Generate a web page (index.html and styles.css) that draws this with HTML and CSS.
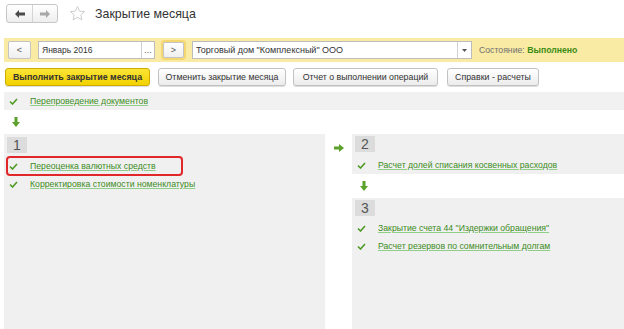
FILE: index.html
```html
<!DOCTYPE html>
<html lang="ru">

<head>
    <meta charset="UTF-8">
    <meta name="viewport" content="width=device-width, initial-scale=1.0">
    <title>Закрытие месяца</title>
    <link rel="stylesheet" href="styles.css">
</head>

<body>
    <header class="title-bar">
        <div class="nav-buttons">
            <span class="nav-btn">
                <svg width="10" height="8" viewBox="0 0 10 8"><path d="M0 4 L4 0 L4 2.5 L10 2.5 L10 5.5 L4 5.5 L4 8 Z" fill="#4a4a4a"/></svg>
            </span>
            <span class="nav-btn">
                <svg width="10" height="8" viewBox="0 0 10 8"><path d="M10 4 L6 0 L6 2.5 L0 2.5 L0 5.5 L6 5.5 L6 8 Z" fill="#a8a8a8"/></svg>
            </span>
        </div>
        <svg class="star" width="17" height="17" viewBox="0 0 24 24">
            <path d="M12 2 L14.9 8.6 L22 9.3 L16.6 14 L18.2 21 L12 17.3 L5.8 21 L7.4 14 L2 9.3 L9.1 8.6 Z" fill="none" stroke="#c9c9c9" stroke-width="1.3" stroke-linejoin="round"/>
        </svg>
        <h1>Закрытие месяца</h1>
    </header>

    <section class="period-bar">
        <button class="small-btn">&lt;</button>
        <div class="field period-field">
            <span class="field-text">Январь 2016</span>
            <span class="field-btn">...</span>
        </div>
        <button class="small-btn focused">&gt;</button>
        <div class="field org-field">
            <span class="field-text">Торговый дом "Комплексный" ООО</span>
            <span class="field-btn drop">
                <svg width="5" height="3" viewBox="0 0 5 3"><path d="M0 0 L5 0 L2.5 3 Z" fill="#555"/></svg>
            </span>
        </div>
        <span class="status">Состояние: <b>Выполнено</b></span>
    </section>

    <section class="command-bar">
        <button class="btn btn-primary">Выполнить закрытие месяца</button>
        <button class="btn">Отменить закрытие месяца</button>
        <button class="btn">Отчет о выполнении операций</button>
        <button class="btn">Справки - расчеты</button>
    </section>

    <div class="strip">
        <div class="op-row">
            <svg class="check" width="9" height="7" viewBox="0 0 9 7"><path d="M1 3.5 L3.5 6 L8 1" fill="none" stroke="#4e9a23" stroke-width="1.6"/></svg>
            <a href="#">Перепроведение документов</a>
        </div>
    </div>

    <div class="arrow-down">
        <svg width="8" height="10" viewBox="0 0 8 10"><path d="M2.5 0 L5.5 0 L5.5 5 L8 5 L4 10 L0 5 L2.5 5 Z" fill="#5ba12b"/></svg>
    </div>

    <main class="stages">
        <div class="panel left-panel">
            <span class="step">1</span>
            <div class="op-row marked">
                <svg class="check" width="9" height="7" viewBox="0 0 9 7"><path d="M1 3.5 L3.5 6 L8 1" fill="none" stroke="#4e9a23" stroke-width="1.6"/></svg>
                <a href="#">Переоценка валютных средств</a>
            </div>
            <div class="op-row">
                <svg class="check" width="9" height="7" viewBox="0 0 9 7"><path d="M1 3.5 L3.5 6 L8 1" fill="none" stroke="#4e9a23" stroke-width="1.6"/></svg>
                <a href="#">Корректировка стоимости номенклатуры</a>
            </div>
        </div>

        <div class="arrow-right">
            <svg width="10" height="8" viewBox="0 0 10 8"><path d="M0 2.5 L5 2.5 L5 0 L10 4 L5 8 L5 5.5 L0 5.5 Z" fill="#5ba12b"/></svg>
        </div>

        <div class="right-column">
            <div class="panel panel-two">
                <span class="step">2</span>
                <div class="op-row">
                    <svg class="check" width="9" height="7" viewBox="0 0 9 7"><path d="M1 3.5 L3.5 6 L8 1" fill="none" stroke="#4e9a23" stroke-width="1.6"/></svg>
                    <a href="#">Расчет долей списания косвенных расходов</a>
                </div>
            </div>
            <div class="arrow-down">
                <svg width="8" height="10" viewBox="0 0 8 10"><path d="M2.5 0 L5.5 0 L5.5 5 L8 5 L4 10 L0 5 L2.5 5 Z" fill="#5ba12b"/></svg>
            </div>
            <div class="panel panel-three">
                <span class="step">3</span>
                <div class="op-row">
                    <svg class="check" width="9" height="7" viewBox="0 0 9 7"><path d="M1 3.5 L3.5 6 L8 1" fill="none" stroke="#4e9a23" stroke-width="1.6"/></svg>
                    <a href="#">Закрытие счета 44 "Издержки обращения"</a>
                </div>
                <div class="op-row">
                    <svg class="check" width="9" height="7" viewBox="0 0 9 7"><path d="M1 3.5 L3.5 6 L8 1" fill="none" stroke="#4e9a23" stroke-width="1.6"/></svg>
                    <a href="#">Расчет резервов по сомнительным долгам</a>
                </div>
            </div>
        </div>
    </main>
</body>

</html>
```

FILE: styles.css
```css
* {
    box-sizing: border-box;
}

body {
    margin: 0;
    width: 624px;
    height: 329px;
    overflow: hidden;
    background-color: #fff;
    font-family: "Liberation Sans", Arial, sans-serif;
    font-size: 9px;
    color: #333;
}

/* Title */

.title-bar {
    display: flex;
    align-items: center;
    height: 30px;
    padding: 0 0 3px 6px;
}

.nav-buttons {
    display: flex;
    height: 19px;
    border: 1px solid #c6c6c6;
    border-radius: 3px;
    background: linear-gradient(#ffffff, #eeeeee);
}

.nav-btn {
    display: flex;
    align-items: center;
    justify-content: center;
    width: 25px;
}

.nav-btn + .nav-btn {
    border-left: 1px solid #d4d4d4;
}

.star {
    margin-left: 11px;
}

.title-bar h1 {
    margin: 0 0 0 9px;
    font-size: 12.4px;
    font-weight: normal;
    color: #333;
}

/* Period and organisation */

.period-bar {
    display: flex;
    align-items: center;
    height: 24px;
    margin: 8px 0 0 4px;
    padding-left: 4px;
    background-color: #f9eaa4;
}

.small-btn {
    width: 23px;
    height: 18px;
    padding: 0;
    border: 1px solid #c4c4c4;
    border-radius: 2px;
    background: linear-gradient(#ffffff, #efefef);
    font-family: inherit;
    font-size: 9px;
    color: #555;
}

.small-btn.focused {
    width: 21px;
    height: 16px;
    margin-left: 8px;
    box-shadow: 0 0 0 2px #f4d770;
}

.field {
    display: flex;
    height: 18px;
    margin-left: 7px;
    border: 1px solid #bcbcbc;
    background-color: #fff;
}

.field-text {
    flex: 1;
    padding: 3px 0 0 3px;
    white-space: nowrap;
}

.field-btn {
    display: flex;
    align-items: center;
    justify-content: center;
    width: 13px;
    border-left: 1px solid #d0d0d0;
    font-size: 9px;
    line-height: 9px;
    color: #555;
}

.period-field {
    width: 117px;
}

.period-field .field-text {
    font-size: 8.5px;
}

.org-field {
    width: 280px;
    margin-left: 8px;
}

.field-btn.drop {
    width: 14px;
}

.status {
    margin-left: 7px;
    font-size: 8.7px;
    color: #707070;
}

.status b {
    color: #3b8c12;
}

/* Commands */

.command-bar {
    display: flex;
    gap: 7px;
    margin: 6px 0 0 5px;
}

.btn {
    height: 18px;
    padding: 0;
    border: 1px solid #c2c2c2;
    border-radius: 3px;
    background: linear-gradient(#ffffff, #ececec);
    box-shadow: 0 1px 0 #dedede;
    font-family: inherit;
    font-size: 8.8px;
    color: #333;
    white-space: nowrap;
}

.btn-primary {
    width: 145px;
    margin-right: 1px;
    border-color: #cfad00;
    background: linear-gradient(#fbe436, #f3d200);
    font-size: 8.9px;
    font-weight: bold;
}

.command-bar .btn:nth-child(2) {
    width: 128px;
}

.command-bar .btn:nth-child(3) {
    width: 145px;
}

.command-bar .btn:nth-child(4) {
    width: 92px;
    margin-left: 2px;
}

/* Operations */

.strip {
    height: 18px;
    margin: 6px 0 0 4px;
    padding-left: 2px;
    background-color: #f1f1f1;
}

.op-row {
    display: flex;
    align-items: center;
    height: 18px;
    padding-left: 3px;
}

.check {
    flex-shrink: 0;
    margin-right: 12px;
}

.op-row a {
    color: #3c8c1c;
    font-size: 8.7px;
    text-decoration: underline;
    text-decoration-color: #8fcf8a;
    white-space: nowrap;
}

.op-row.marked {
    width: 177px;
    height: 20px;
    margin: -1px 0;
    padding-left: 1px;
    border: 2px solid #e2272b;
    border-radius: 4px;
}

.arrow-down {
    display: flex;
    align-items: center;
    height: 24px;
    padding-left: 12px;
}

.stages {
    display: grid;
    grid-template-columns: 321px 27px 272px;
    height: 195px;
    margin-left: 4px;
}

.panel {
    padding: 3px 2px 0;
    background-color: #f0f0f0;
}

.step {
    display: block;
    width: 20px;
    height: 16px;
    margin: 0 0 4px 1px;
    background-color: #dcdcdc;
    font-size: 14px;
    line-height: 16px;
    text-align: center;
    color: #555;
}

.arrow-right {
    display: flex;
    justify-content: center;
    padding-top: 10px;
}

.right-column {
    display: flex;
    flex-direction: column;
}

.panel-two {
    height: 40px;
    padding-top: 2px;
}

.right-column .arrow-down {
    height: 24px;
    padding-left: 8px;
}

.panel-three {
    flex: 1;
    padding-top: 2px;
}

.panel-three .step {
    margin-bottom: 3px;
}
```
